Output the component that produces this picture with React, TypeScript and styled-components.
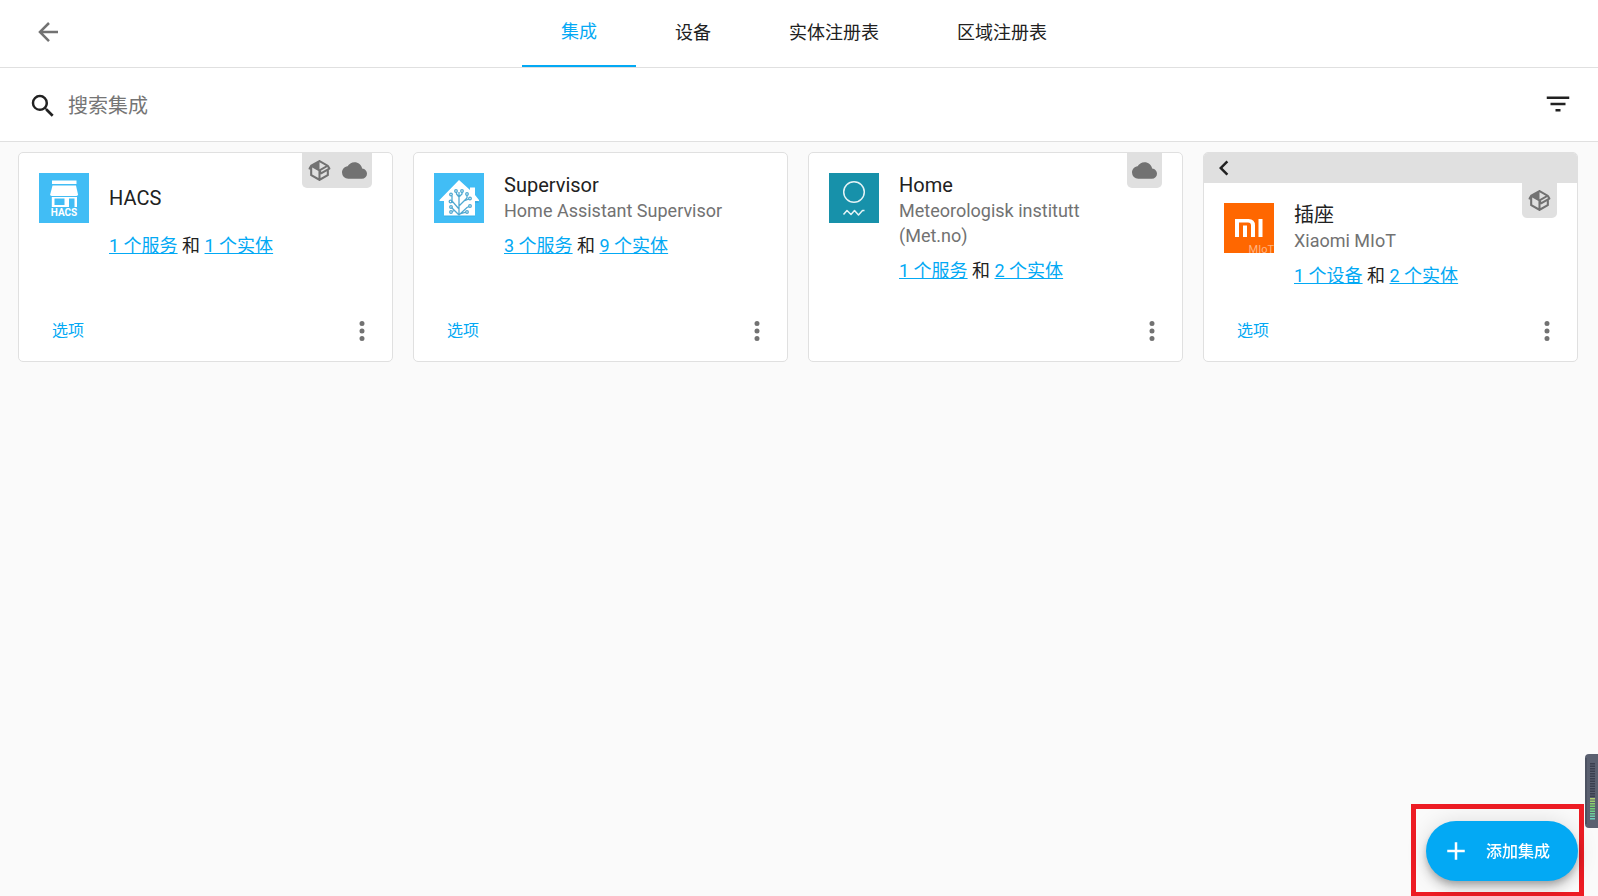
import React from "react";
import styled, { createGlobalStyle } from "styled-components";

const GlobalStyle = createGlobalStyle`
  *, *::before, *::after { box-sizing: border-box; }
  body {
    margin: 0;
    background: #fafafa;
    color: #212121;
    font-family: Roboto, "Noto Sans CJK SC", sans-serif;
    font-size: 18px;
    line-height: 25px;
  }
  button, input { font: inherit; color: inherit; }
  button { border: 0; background: none; padding: 0; cursor: pointer; }
`;

const Page = styled.div`
  min-height: 100vh;
  display: flex;
  flex-direction: column;
`;

const Toolbar = styled.header`
  display: flex;
  height: 68px;
  padding: 0 20px 0 18px;
  background: #fff;
  border-bottom: 1px solid #e0e0e0;
`;

const IconButton = styled.button<{ $size?: number }>`
  display: flex;
  align-items: center;
  justify-content: center;
  width: ${(p) => p.$size ?? 60}px;
  height: ${(p) => p.$size ?? 60}px;
  color: #727272;
`;

const BackButton = styled(IconButton)`
  height: 64px;
`;

const Tabs = styled.nav`
  flex: 1;
  display: flex;
  justify-content: center;
  padding-right: 48px;
`;

const Tab = styled.a<{ $active?: boolean }>`
  display: flex;
  align-items: center;
  height: 67px;
  padding: 0 39px 2px;
  text-decoration: none;
  color: ${(p) => (p.$active ? "#03a9f4" : "#212121")};
  border-bottom: ${(p) => (p.$active ? "2px solid #03a9f4" : "0")};
`;

const SearchBar = styled.div`
  display: flex;
  align-items: center;
  height: 74px;
  padding: 2px 25px 0 28px;
  background: #fff;
  border-bottom: 1px solid #e0e0e0;
`;

const SearchLabel = styled.label`
  flex: 1;
  display: flex;
  align-items: center;
  gap: 10px;
`;

const SearchInput = styled.input`
  flex: 1;
  border: 0;
  padding: 2px 0 0;
  outline: none;
  background: transparent;
  font-size: 20px;
  &::placeholder { color: #757575; opacity: 1; }
`;

const FilterButton = styled(IconButton)`
  color: #212121;
  width: 30px;
  height: 34px;
  align-items: flex-start;
`;

const Grid = styled.main`
  display: grid;
  grid-template-columns: repeat(auto-fill, minmax(320px, 1fr));
  gap: 20px;
  padding: 10px 20px 20px 18px;
`;

const Card = styled.article`
  display: flex;
  flex-direction: column;
  background: #fff;
  border: 1px solid #e0e0e0;
  border-radius: 5px;
  overflow: hidden;
`;

const GroupBar = styled.div`
  display: flex;
  height: 30px;
  padding-left: 5px;
  background: #e0e0e0;
`;

const GroupBack = styled(IconButton)`
  color: #212121;
`;

const CardBody = styled.div`
  position: relative;
  flex: 1;
  display: grid;
  grid-template-columns: 50px 1fr;
  grid-template-rows: auto 1fr;
  column-gap: 20px;
  row-gap: 10px;
  padding: 20px 50px 13px 20px;
`;

const Logo = styled.svg`
  display: block;
  width: 50px;
  height: 50px;
  overflow: visible;
`;

const Titles = styled.div`
  display: flex;
  flex-direction: column;
  justify-content: center;
  min-height: 50px;
`;

const Title = styled.h3`
  margin: 0;
  font-size: 20px;
  font-weight: 400;
  line-height: 25px;
`;

const Subtitle = styled.div`
  color: #727272;
`;

const Counts = styled.div`
  grid-column: 2;
  white-space: nowrap;
`;

const CountLink = styled.a`
  color: #03a9f4;
`;

const Badges = styled.div`
  position: absolute;
  top: 0;
  right: 20px;
  display: flex;
  background: #e0e0e0;
  color: #727272;
  border-radius: 0 0 5px 5px;
`;

const Badge = styled.span`
  display: flex;
  padding: 5px;
`;

const Footer = styled.div`
  display: flex;
  align-items: center;
  justify-content: space-between;
  height: 60px;
  padding-left: 20px;
`;

const OptionsButton = styled.button`
  padding: 0 13px 2px;
  height: 45px;
  font-size: 16px;
  color: #03a9f4;
`;

const MenuButton = styled(IconButton)`
  margin-left: auto;
`;

const Highlight = styled.div`
  position: fixed;
  right: 14px;
  bottom: 0;
  padding: 12px 1px 11px 10px;
  border: 5px solid #ed1c24;
  border-bottom-width: 4px;
`;

const Fab = styled.button`
  display: flex;
  align-items: center;
  gap: 15px;
  height: 60px;
  padding: 0 28px 0 15px;
  border-radius: 30px;
  background: #03a9f4;
  color: #fff;
  font-size: 16px;
  font-weight: 500;
  box-shadow: 0 4px 6px -1px rgba(0, 0, 0, 0.2), 0 8px 12px rgba(0, 0, 0, 0.14),
    0 1px 22px rgba(0, 0, 0, 0.12);
`;

const Meter = styled.aside`
  position: fixed;
  right: 0;
  bottom: 68px;
  width: 13px;
  height: 74px;
  svg { display: block; }
`;

const paths = {
  back: "M20,11V13H8L13.5,18.5L12.08,19.92L4.16,12L12.08,4.08L13.5,5.5L8,11H20Z",
  search:
    "M9.5,3A6.5,6.5 0 0,1 16,9.5C16,11.11 15.41,12.59 14.44,13.73L14.71,14H15.5L20.5,19L19,20.5L14,15.5V14.71L13.73,14.44C12.59,15.41 11.11,16 9.5,16A6.5,6.5 0 0,1 3,9.5A6.5,6.5 0 0,1 9.5,3M9.5,5C7,5 5,7 5,9.5C5,12 7,14 9.5,14C12,14 14,12 14,9.5C14,7 12,5 9.5,5Z",
  filter: "M6,13H18V11H6M3,6V8H21V6M10,18H14V16H10V18Z",
  chevron: "M15.41,16.58L10.83,12L15.41,7.41L14,6L8,12L14,18L15.41,16.58Z",
  dots: "M12,16A2,2 0 0,1 14,18A2,2 0 0,1 12,20A2,2 0 0,1 10,18A2,2 0 0,1 12,16M12,10A2,2 0 0,1 14,12A2,2 0 0,1 12,14A2,2 0 0,1 10,12A2,2 0 0,1 12,10M12,4A2,2 0 0,1 14,6A2,2 0 0,1 12,8A2,2 0 0,1 10,6A2,2 0 0,1 12,4Z",
  plus: "M19,13H13V19H11V13H5V11H11V5H13V11H19V13Z",
  cloud:
    "M19.35,10.03C18.67,6.59 15.64,4 12,4C9.11,4 6.6,5.64 5.35,8.03C2.34,8.36 0,10.9 0,14A6,6 0 0,0 6,20H19A5,5 0 0,0 24,15C24,12.36 21.95,10.22 19.35,10.03Z",
  custom:
    "M2,10.96C1.5,10.68 1.35,10.07 1.63,9.59L3.13,7C3.24,6.8 3.41,6.66 3.6,6.58L11.43,2.18C11.59,2.06 11.79,2 12,2C12.21,2 12.41,2.06 12.57,2.18L20.47,6.62C20.66,6.72 20.82,6.88 20.91,7.08L22.36,9.6C22.64,10.08 22.47,10.69 22,10.96L21,11.54V16.5C21,16.88 20.79,17.21 20.47,17.38L12.57,21.82C12.41,21.94 12.21,22 12,22C11.79,22 11.59,21.94 11.43,21.82L3.53,17.38C3.21,17.21 3,16.88 3,16.5V10.96C2.7,11.13 2.32,11.14 2,10.96M12,4.15V4.15L12,10.85V10.85L17.96,7.5L12,4.15M5,15.91L11,19.29V12.58L5,9.21V15.91M19,15.91V12.69L14,15.59C13.67,15.77 13.3,15.76 13,15.6V19.29L19,15.91M13.85,13.36L20.13,9.73L19.55,8.72L13.27,12.35L13.85,13.36Z",
};

type IconName = keyof typeof paths;

const Icon = ({ name, size = 30 }: { name: IconName; size?: number }) => (
  <svg width={size} height={size} viewBox="0 0 24 24" fill="currentColor" aria-hidden="true">
    <path d={paths[name]} />
  </svg>
);

const HacsLogo = () => (
  <Logo viewBox="0 0 50 50" role="img" aria-label="HACS">
    <rect width="50" height="50" fill="#41bdf5" />
    <g fill="#fff">
      <path d="M13 7.500H37.500V11H13Z" />
      <path d="M13.500 12.500H37L39 21.500Q38.700 23 37 23H13Q11.300 23 11.200 21.500Z" />
      <path fillRule="evenodd" d="M12.800 24H38V34H35.500V25.500H30V34H12.800ZM15.500 25.500V32H25.500V25.500Z" />
    </g>
    <text x="25" y="43" textAnchor="middle" fill="#fff" fontFamily="Roboto, sans-serif" fontWeight="700" fontSize="10">
      HACS
    </text>
  </Logo>
);

const HomeAssistantLogo = () => (
  <Logo viewBox="0 0 50 50" role="img" aria-label="Home Assistant">
    <rect width="50" height="50" fill="#41bdf5" />
    <path d="M10 43.500H41V30H45L42 26H10Z" fill="#2e9fd4" opacity=".5" />
    <path d="M25 7L36 17V14.500H41V22L45 27V28H41V42.500H10V28H5.500V27Z" fill="#fff" />
    <g fill="none" stroke="#50a9d2" strokeWidth="1.300">
      <path d="M25 42V19M25 42L17.500 34.500M25 42L33 34.500L35 33.500M25 36L18 28V23M25 33L33 25V22M20.500 37.500L18 38.500M25 41L32 39M25 24L22.500 21V19M25 24L28 21V19M20 30L17.500 29M30 28L35 26" />
      <circle cx="22" cy="18" r="1.300" />
      <circle cx="28" cy="18" r="1.300" />
      <circle cx="17" cy="21.500" r="1.300" />
      <circle cx="33" cy="21" r="1.300" />
      <circle cx="16.500" cy="28.500" r="1.300" />
      <circle cx="36" cy="25.500" r="1.300" />
      <circle cx="17" cy="34" r="1.300" />
      <circle cx="36" cy="33" r="1.300" />
      <circle cx="17" cy="39" r="1.300" />
      <circle cx="33" cy="39" r="1.300" />
    </g>
  </Logo>
);

const MetLogo = () => (
  <Logo viewBox="0 0 50 50" role="img" aria-label="Met.no">
    <rect width="50" height="50" fill="#1791aa" />
    <g fill="none" stroke="#e3f3f6" strokeWidth="1.500">
      <circle cx="25" cy="19" r="10.300" />
      <path d="M14.500 41.500L18 37.500L22 41.500L25.500 37.500L29.500 42L33.500 37.500H35.500" strokeLinejoin="round" />
    </g>
  </Logo>
);

const MiotLogo = () => (
  <Logo viewBox="0 0 50 50" role="img" aria-label="Xiaomi MIoT">
    <rect width="50" height="50" fill="#ff6700" />
    <g fill="#fff">
      <path d="M11 16H24.500Q31 16 31 22.500V34H27V22.500Q27 19.500 24 19.500H15V34H11Z" />
      <path d="M19 22.500H23V34H19Z" />
      <path d="M34.500 16H38.500V34H34.500Z" />
    </g>
    <text x="50" y="50" textAnchor="end" fill="#ffb380" fontFamily="Roboto, sans-serif" fontSize="11">
      MIoT
    </text>
  </Logo>
);

type Integration = {
  title: string;
  subtitle?: string;
  logo: React.ReactNode;
  counts: [string, string];
  badges: IconName[];
  options?: boolean;
  grouped?: boolean;
};

const badgeLabels: Partial<Record<IconName, string>> = {
  custom: "自定义集成",
  cloud: "依赖云服务",
};

const integrations: Integration[] = [
  { title: "HACS", logo: <HacsLogo />, counts: ["1 个服务", "1 个实体"], badges: ["custom", "cloud"], options: true },
  {
    title: "Supervisor",
    subtitle: "Home Assistant Supervisor",
    logo: <HomeAssistantLogo />,
    counts: ["3 个服务", "9 个实体"],
    badges: [],
    options: true,
  },
  {
    title: "Home",
    subtitle: "Meteorologisk institutt (Met.no)",
    logo: <MetLogo />,
    counts: ["1 个服务", "2 个实体"],
    badges: ["cloud"],
  },
  {
    title: "插座",
    subtitle: "Xiaomi MIoT",
    logo: <MiotLogo />,
    counts: ["1 个设备", "2 个实体"],
    badges: ["custom"],
    options: true,
    grouped: true,
  },
];

const IntegrationCard = ({ item }: { item: Integration }) => (
  <Card>
    {item.grouped && (
      <GroupBar>
        <GroupBack $size={30} aria-label="返回">
          <Icon name="chevron" />
        </GroupBack>
      </GroupBar>
    )}
    <CardBody>
      {item.logo}
      <Titles>
        <Title>{item.title}</Title>
        {item.subtitle && <Subtitle>{item.subtitle}</Subtitle>}
      </Titles>
      <Counts>
        <CountLink href="#devices">{item.counts[0]}</CountLink> 和{" "}
        <CountLink href="#entities">{item.counts[1]}</CountLink>
      </Counts>
      {item.badges.length > 0 && (
        <Badges>
          {item.badges.map((name) => (
            <Badge key={name} role="img" aria-label={badgeLabels[name]}>
              <Icon name={name} size={25} />
            </Badge>
          ))}
        </Badges>
      )}
    </CardBody>
    <Footer>
      {item.options && <OptionsButton>选项</OptionsButton>}
      <MenuButton aria-label="菜单">
        <Icon name="dots" />
      </MenuButton>
    </Footer>
  </Card>
);

const meterBars = Array.from({ length: 23 }, (_, i) => i);

const meterColor = (i: number) => {
  if (i < 14) return "#3a3f4e";
  return `hsl(${80 + (i - 14) * 11}, 50%, 62%)`;
};

const LevelMeter = () => (
  <Meter aria-hidden="true">
    <svg width="13" height="74" viewBox="0 0 13 74">
      <path d="M13 0H4Q0 0 0 4V70Q0 74 4 74H13Z" fill="#5a6070" />
      <path d="M1 4V70" stroke="#3f4452" strokeWidth="1" />
      {meterBars.map((i) => (
        <rect key={i} x="5" y={9 + i * 2.5} width="5" height="1.500" fill={meterColor(i)} />
      ))}
    </svg>
  </Meter>
);

const App = () => (
  <Page>
    <GlobalStyle />
    <Toolbar>
      <BackButton aria-label="返回">
        <Icon name="back" />
      </BackButton>
      <Tabs>
        <Tab href="#integrations" $active aria-current="page">集成</Tab>
        <Tab href="#devices">设备</Tab>
        <Tab href="#entities">实体注册表</Tab>
        <Tab href="#areas">区域注册表</Tab>
      </Tabs>
    </Toolbar>
    <SearchBar>
      <SearchLabel>
        <Icon name="search" />
        <SearchInput type="text" placeholder="搜索集成" aria-label="搜索集成" />
      </SearchLabel>
      <FilterButton aria-label="筛选">
        <Icon name="filter" />
      </FilterButton>
    </SearchBar>
    <Grid>
      {integrations.map((item) => (
        <IntegrationCard key={item.title} item={item} />
      ))}
    </Grid>
    <Highlight>
      <Fab>
        <Icon name="plus" />
        添加集成
      </Fab>
    </Highlight>
    <LevelMeter />
  </Page>
);

export default App;
